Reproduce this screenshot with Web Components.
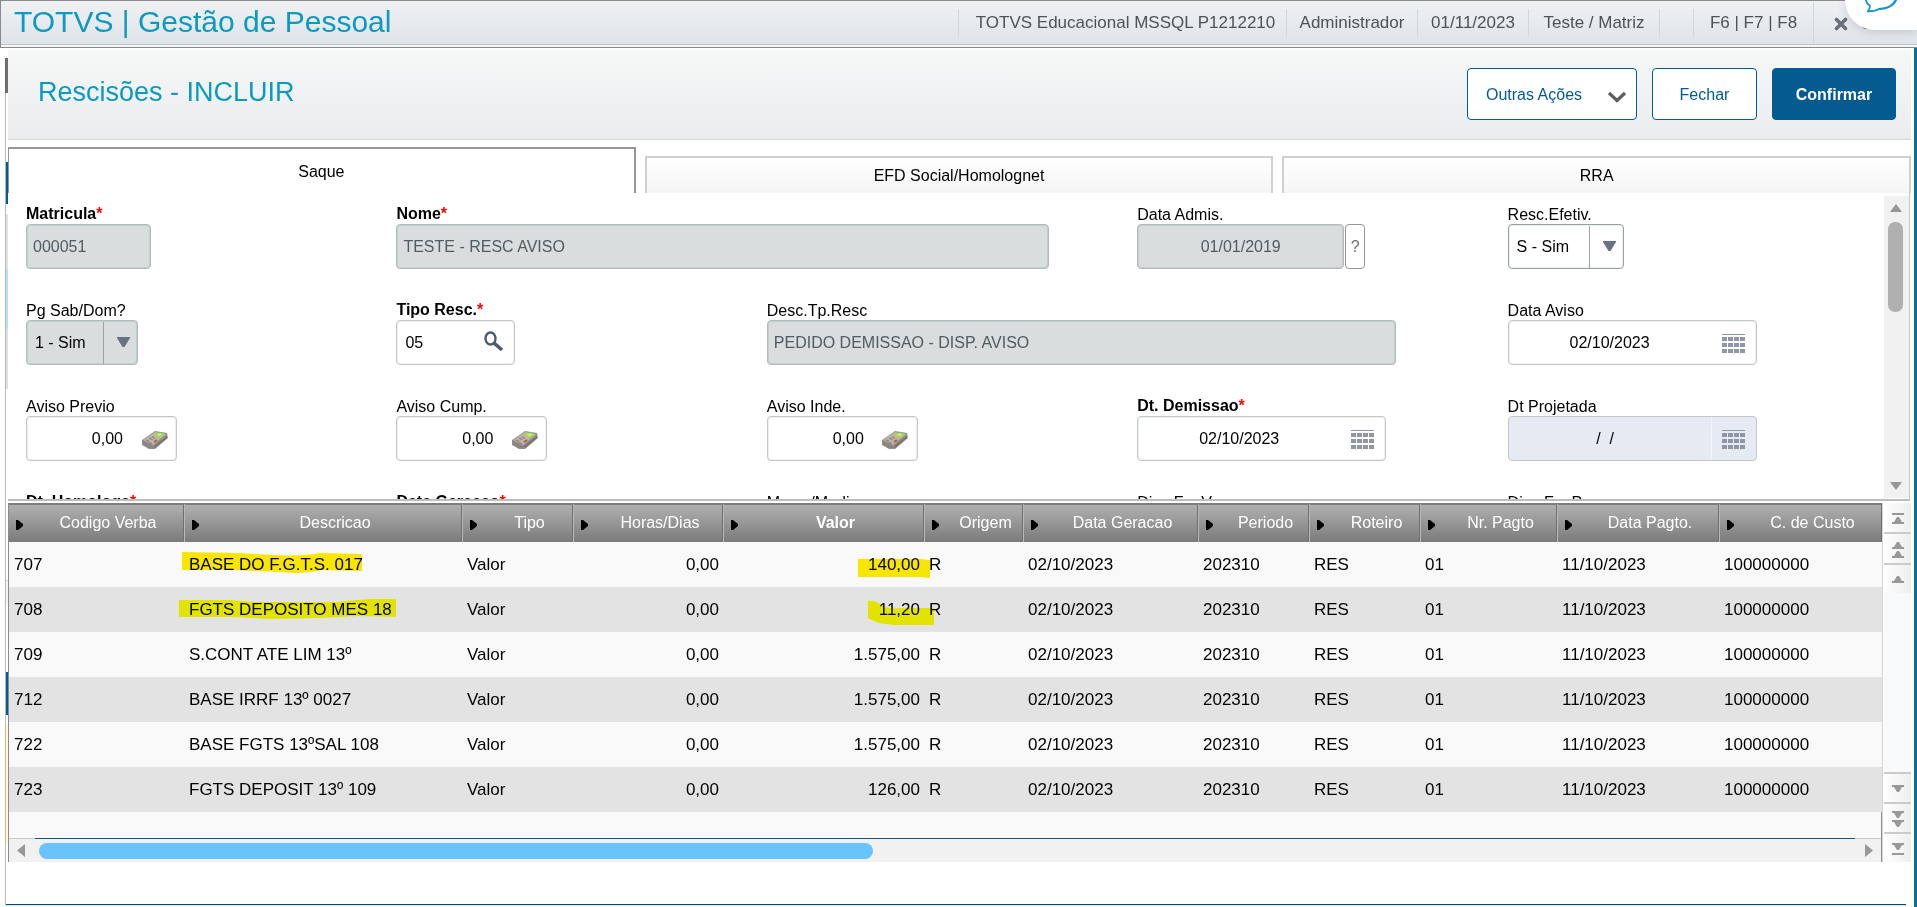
<!DOCTYPE html>
<html lang="pt-BR">
<head>
<meta charset="utf-8">
<title>TOTVS | Gestão de Pessoal</title>
<style>
  html, body { margin: 0; height: 100%; }
  body { background: #fff; font: 16px/20px "Liberation Sans", Arial, sans-serif; color: #000; overflow: hidden; }
</style>
</head>
<body>
<app-shell>
  <top-bar slot="top"></top-bar>
  <page-head heading="Rescisões - INCLUIR"></page-head>
  <tab-strip></tab-strip>
  <form-panel>
    <form-field label="Matricula" required kind="text" value="000051" width="125" locked></form-field>
    <form-field label="Nome" required kind="text" value="TESTE - RESC AVISO" width="653" span="2" locked></form-field>
    <form-field label="Data Admis." kind="text" value="01/01/2019" width="207" centered help locked></form-field>
    <form-field label="Resc.Efetiv." kind="select" value="S - Sim" width="116"></form-field>

    <form-field label="Pg Sab/Dom?" kind="select" value="1 - Sim" width="112" locked></form-field>
    <form-field label="Tipo Resc." required kind="lookup" value="05" width="119"></form-field>
    <form-field label="Desc.Tp.Resc" kind="text" value="PEDIDO DEMISSAO - DISP. AVISO" width="629" span="2" locked></form-field>
    <form-field label="Data Aviso" kind="date" value="02/10/2023" width="249"></form-field>

    <form-field label="Aviso Previo" kind="number" value="0,00" width="151"></form-field>
    <form-field label="Aviso Cump." kind="number" value="0,00" width="151"></form-field>
    <form-field label="Aviso Inde." kind="number" value="0,00" width="151"></form-field>
    <form-field label="Dt. Demissao" required kind="date" value="02/10/2023" width="249"></form-field>
    <form-field label="Dt Projetada" kind="date" value="/  /  " width="249" focused></form-field>

    <form-field label="Dt. Homologa" required kind="date" value="" width="249"></form-field>
    <form-field label="Data Geracao" required kind="date" value="" width="249"></form-field>
    <form-field label="Mes p/Media" kind="number" value="" width="151"></form-field>
    <form-field label="Dias Fer.Venc" kind="number" value="" width="151"></form-field>
    <form-field label="Dias Fer.Prop" kind="number" value="" width="151"></form-field>
  </form-panel>
  <data-grid></data-grid>
</app-shell>

<script>
const define = (name, build) => customElements.define(name, class extends HTMLElement {
  connectedCallback() {
    if (this.shadowRoot) return;
    this.attachShadow({ mode: 'open' }).innerHTML = build(this);
  }
});

define('app-shell', () => `
  <style>
    :host { display: flex; flex-direction: column; height: 100vh; position: relative; }
    .body { flex: 1; min-height: 0; display: flex; padding-left: 5px; }
    .line { width: 1px; margin-bottom: 2px; background: linear-gradient(#fff 10px, #666 10px 45px, #b8b8b8 45px); }
    .edge { width: 2px; background: linear-gradient(#fff 10px, #707070 10px 45px, #fff 45px 114px,
      #005c93 114px 156px, #fff 156px 166px, #e2e2e2 166px 221px, #b5e0fb 221px 281px, #dfdfdf 281px 341px,
      #fff 341px 532px, #d5d5d5 532px 533px, #f4f4f4 533px 556px, #fff 556px 624px, #005c93 624px 667px,
      #fff 667px 676px, #fff8d6 676px 796px, #fff 796px); }
    .main { flex: 1; min-width: 0; display: flex; flex-direction: column; margin-top: 2px; }
    .foot { margin: auto 5px 1px -2px; height: 2px; background: linear-gradient(#00477a 1px, #dde6ee 1px); }
    .gap { width: 3px; }
    .desk { width: 3px; background: #08718b; }
  </style>
  <slot name="top"></slot>
  <div class="body">
    <div class="line"></div><div class="edge"></div>
    <div class="main"><slot></slot><div class="foot"></div></div>
    <div class="gap"></div><div class="desk"></div>
  </div>`);

define('top-bar', () => `
  <style>
    :host { display: flex; box-sizing: border-box; height: 48px; border: 1px solid #8a8a8a; border-right: 0; font-size: 17px;
      background: linear-gradient(#eff1f4, #dfe4e9 43px, #bcc6cc 43px 44px, #f4f6f8 44px); color: #505356; position: relative; }
    h1 { margin: 0 auto 0 13px; font-size: 30px; line-height: 42px; font-weight: 400; color: #0c9abe; white-space: nowrap; }
    .item { box-sizing: border-box; height: 28px; margin-top: 8px; border-left: 1px solid #d2d7da;
      line-height: 28px; text-align: center; white-space: nowrap; }
    .env { width: 328px; padding-left: 6px; }
    .user, .unit { width: 131px; }
    .date { width: 111px; }
    .blank { width: 34px; }
    .keys { width: 120px; }
    .exit { width: 104px; height: 42px; margin: 1px 0 0; padding: 1px 0 0 20px; display: flex; align-items: center; gap: 13px; border: 0;
      border-left: 1px solid #d2d7da; background: none; font: inherit; color: inherit; }
    .chat { position: absolute; top: -1px; right: 0; width: 72px; height: 30px; background: #fff; border-radius: 0 0 0 30px;
      box-shadow: 0 2px 10px rgba(60, 70, 80, .2); border: 0; padding: 0; }
    svg { display: block; }
  </style>
  <h1>TOTVS | Gestão de Pessoal</h1>
  <div class="item env">TOTVS Educacional MSSQL P1212210</div>
  <div class="item user">Administrador</div>
  <div class="item date">01/11/2023</div>
  <div class="item unit">Teste / Matriz</div>
  <div class="item blank"></div>
  <div class="item keys">F6 | F7 | F8</div>
  <button class="exit"><svg width="14" height="14" viewBox="0 0 14 14"><path d="M2.500 2.500L11.500 11.500M11.500 2.500L2.500 11.500" stroke="#69707c" stroke-width="3.600" stroke-linecap="round"/></svg><span>Sair</span></button>
  <button class="chat" aria-label="Chat"><svg width="72" height="30" viewBox="0 0 72 30" fill="none" stroke="#1590d0" stroke-linecap="round" stroke-linejoin="round">
    <path d="M20.500 -1C21 1.500 22.500 4 25 6C24.800 8.400 24 10 22.800 11.300C27.500 11.500 31.500 10.600 34.200 9C42 9.300 49.500 5.500 51.500 -1" stroke-width="1.800"/>
    <path d="M23.500 11.300C29 11.200 32 9.900 34.500 8.400C42.500 8.300 48.500 4.500 50 -1" stroke-width="1"/></svg></button>`);

define('page-head', el => `
  <style>
    :host { display: flex; align-items: flex-start; gap: 15px; box-sizing: border-box; height: 90px; padding: 18px 15px 0 30px;
      border-bottom: 1px solid #d3d6d7; background: linear-gradient(#f6f7f7, #ebecee); }
    h2 { margin: 0 auto 0 0; padding-top: 9px; font-size: 27px; line-height: 31px; font-weight: 400; color: #0c9abe; }
    button { height: 52px; box-sizing: border-box; border: 1px solid #005c93; border-radius: 4px; background: #fff;
      font: inherit; color: #005c93; padding: 2px 0 0; }
    .menu { width: 170px; display: flex; align-items: center; justify-content: space-between; padding: 2px 9px 0 18px; }
    .menu svg { margin-top: 4px; }
    .close { width: 105px; }
    .ok { width: 124px; background: #045b90; color: #fff; font-weight: 700; }
  </style>
  <h2>${el.getAttribute('heading')}</h2>
  <button class="menu">Outras Ações<svg width="20" height="12" viewBox="0 0 20 12"><path d="M2 2L10 9.500L18 2" fill="none" stroke="#5f5f5f" stroke-width="3.200"/></svg></button>
  <button class="close">Fechar</button>
  <button class="ok">Confirmar</button>`);

define('tab-strip', () => `
  <style>
    :host { display: flex; align-items: flex-end; gap: 9px; height: 46px; margin-top: 7px; }
    button { flex: 1; height: 37px; box-sizing: border-box; border: 2px solid #d0d0d0; border-bottom: 0; padding: 0;
      background: linear-gradient(#fff, #f5f5f5); font: inherit; color: #000; }
    .on { height: 46px; border: 1px solid #969696; border-width: 2px 2px 0 1px; padding-top: 1px; background: #fff; }
  </style>
  <button class="on" role="tab" aria-selected="true">Saque</button>
  <button role="tab">EFD Social/Homolognet</button>
  <button role="tab">RRA</button>`);

define('form-panel', () => `
  <style>
    :host { display: flex; box-sizing: border-box; height: 308px; margin-right: 1px; padding-top: 3px; border-right: 1px solid #c6c6c6; border-bottom: 2px solid #bdbdbd; }
    .grid { flex: 1; min-width: 0; overflow: hidden; display: grid; grid-template-columns: repeat(5, 1fr);
      grid-auto-rows: 96px; padding: 8px 6px 0 18px; }
    .bar { width: 25px; box-sizing: border-box; background: #f1f1f1; display: flex; flex-direction: column; align-items: center; padding: 8px 2px 8px 0; margin-bottom: 1px; }
    .thumb { width: 15px; height: 90px; margin: 10px 0 auto; border-radius: 7px; background: #b0b0b0; }
  </style>
  <div class="grid"><slot></slot></div>
  <div class="bar">
    <svg width="12" height="8"><path d="M0 8L6 0L12 8Z" fill="#979797"/></svg>
    <div class="thumb"></div>
    <svg width="12" height="8"><path d="M0 0H12L6 8Z" fill="#979797"/></svg>
  </div>`);

const icons = {
  lookup: `<svg width="20" height="21" viewBox="0 0 20 21" fill="none" stroke="#4d5a6c"><ellipse cx="6.500" cy="7.500" rx="5" ry="6" stroke-width="2.400"/><path d="M10 12L18 19" stroke-width="3.600"/></svg>`,
  number: `<svg width="28" height="20" viewBox="0 0 28 20">
    <path d="M1 10L14 1L26 3L27 8L14 19L8 19L1 15Z" fill="#96908a"/>
    <path d="M2 10L14 2L25 4L12 15Z" fill="#bdb4ad"/>
    <path d="M2 11L12 16L13 18L8 18L1.500 14Z" fill="#8b857f"/>
    <path d="M13 16L26 6L26 8L14 18Z" fill="#77726d"/>
    <path d="M14 3.500L20 2.500L24 5L19 8L13 6Z" fill="#a9d65a"/>
    <path d="M16 4L20 3.500L21 5L18 6Z" fill="#c9ee8c"/>
    <path d="M5 10L8 11.500M8 8L11.500 9.500M8 12.500L11 14M11 6.500L14 8.500" stroke="#94887f" stroke-width="1.400"/>
    <path d="M13 12L16 10" stroke="#c4583f" stroke-width="2"/></svg>`,
  date: `<svg width="23" height="20" viewBox="0 0 23 20" fill="#8f97a6"><path d="M0 0H23V1H0Z"/>${
    [3, 9, 15].map(y => [0, 6, 12, 18].map(x => `<path d="M${x} ${y}h5v4h-5z"/>`).join('')).join('')}</svg>`
};

define('form-field', el => {
  const at = n => el.getAttribute(n), has = n => el.hasAttribute(n);
  const kind = at('kind'), value = at('value');
  const lock = has('locked') ? 'disabled' : '';
  const control = kind === 'select'
    ? `<select id="f" ${lock}><option>${value}</option></select><span class="drop"><svg width="13" height="10"><path d="M0 0H13V1L7.500 10H5.500L0 1Z" fill="#6a7282"/></svg></span>`
    : `<input id="f" type="text" value="${value}" ${lock}>${icons[kind] ? `<button class="ico" aria-label="${kind}">${icons[kind]}</button>` : ''}`;
  return `
  <style>
    :host { display: block; min-width: 0; grid-column: span ${at('span') || 1}; }
    label { display: block; height: 20px; line-height: 22px; white-space: nowrap; }
    label.req { font-weight: 700; line-height: 20px; }
    i { font: inherit; color: #f00; }
    .row { display: flex; gap: 1px; }
    .box { display: flex; box-sizing: border-box; width: ${at('width')}px; height: 45px; border: 1px solid #c3c8c8;
      box-shadow: inset 0 0 0 1px #eef0f0; border-radius: 4px; background: #fff; }
    .box.locked { background: #d9dddd; border-color: #b3bcbc; box-shadow: inset 0 0 0 1px #c6cdcd; }
    .box.select:not(.locked) { border-color: #98a2a4; }
    .box.focused { background: #e6eaf3; box-shadow: none; }
    input, select { flex: 1; min-width: 0; width: 0; margin: 0; padding: 0 6px; border: 0; outline: 0; background: none; appearance: none;
      font: inherit; color: #000; opacity: 1; white-space: pre; }
    .centered input { text-align: center; }
    input:disabled { color: #505c62; -webkit-text-fill-color: #505c62; }
    select { padding: 0 0 0 8px; }
    .lookup input { padding: 0 8px; }
    .date input { text-align: center; padding: 0; }
    .number input { text-align: right; padding: 0; }
    .ico { border: 0; padding: 0; background: none; display: flex; align-items: center; justify-content: center; }
    .date .ico { width: 45px; padding: 2px 0 0; }
    .focused .ico { border-left: 1px solid #f4f6fa; }
    .number .ico { width: 53px; padding: 2px 0 0 10px; }
    .lookup .ico { width: 42px; padding: 0 0 2px 2px; }
    .drop { width: 34px; margin-top: 1px; border-left: 1px solid #9aa3a6; display: flex; align-items: center; justify-content: center; padding: 0 0 2px 6px; box-sizing: border-box; pointer-events: none; }
    .help { width: 20px; height: 45px; border: 1px solid #969696; border-radius: 4px; background: #fff; padding: 0; font: inherit; color: #6f6f6f; }
  </style>
  <label for="f" class="${has('required') ? 'req' : ''}">${at('label')}${has('required') ? '<i>*</i>' : ''}</label>
  <div class="row"><div class="box ${kind} ${has('locked') ? 'locked' : ''} ${has('focused') ? 'focused' : ''} ${has('centered') ? 'centered' : ''}">${control}</div>${has('help') ? '<button class="help">?</button>' : ''}</div>`;
});

const columns = [['Codigo Verba', 175], ['Descricao', 278], ['Tipo', 111], ['Horas/Dias', 150], ['Valor', 201], ['Origem', 99],
  ['Data Geracao', 175], ['Periodo', 111], ['Roteiro', 111], ['Nr. Pagto', 137], ['Data Pagto.', 162], ['C. de Custo', 163]];
const rows = [['707', 'BASE DO F.G.T.S. 017', '140,00'], ['708', 'FGTS DEPOSITO MES 18', '11,20'], ['709', 'S.CONT ATE LIM 13º', '1.575,00'],
  ['712', 'BASE IRRF 13º 0027', '1.575,00'], ['722', 'BASE FGTS 13ºSAL 108', '1.575,00'], ['723', 'FGTS DEPOSIT 13º 109', '126,00']];
const marks = {
  '0-1': ['left:-2px;top:10px', 180, 22, 'M0 0L52 1L92 3C112 4 128 3 138 1L180 2V19L140 18C128 21 112 22 100 20L50 18L0 18Z'],
  '1-1': ['left:-5px;top:12px', 217, 21, 'M0 1H50L76 3L160 3C176 1 186 0 196 0H217V18L180 17L140 19L90 20L56 18L0 18Z'],
  '0-4': ['right:-6px;top:17px', 72, 19, 'M0 0H62L72 1V19L62 18H0Z'],
  '1-4': ['right:-10px;top:14px', 66, 25, 'M0 0C6 -1 9 1 13 4C18 7 24 8 34 7H66V24H32C18 24 8 22 0 17Z']
};
const mark = (r, c) => {
  const m = marks[r + '-' + c];
  return m ? `<svg class="mark" style="${m[0]}" width="${m[1]}" height="${m[2]}"><path d="${m[3]}" fill="${r ? '#ffff00' : '#ffec00'}"/></svg>` : '';
};
const cells = r => [r[0], r[1], 'Valor', '0,00', r[2], 'R', '02/10/2023', '202310', 'RES', '01', '11/10/2023', '100000000'];
const up = y => `<path d="M2 ${y + 7}H14V${y + 5}H12L9 ${y}H7L4 ${y + 5}H2Z" fill="#989898"/>`;
const down = y => `<path d="M2 ${y}H14V${y + 2}H12L9 ${y + 7}H7L4 ${y + 2}H2Z" fill="#989898"/>`;
const nav = (name, art) => `<button aria-label="${name}"><svg width="16" height="22">${art}</svg></button>`;

define('data-grid', () => `
  <style>
    :host { display: flex; height: 359px; margin-top: 2px; }
    .left { flex: 1; min-width: 0; display: flex; flex-direction: column; border-left: 1px solid #8c8c8c; border-right: 1px solid #8f8f8f; box-shadow: 1px 0 #d4d4d4; margin-right: 2px; }
    .view { flex: 1; min-height: 0; background: #f9f9f9; }
    table { width: 100%; table-layout: fixed; border-collapse: separate; border-spacing: 0; }
    th { box-sizing: border-box; height: 39px; padding: 0 0 2px 24px; border-top: 2px solid #7e7e7e; border-left: 1px solid #b9b9b9; border-right: 1px solid #707070;
      background: linear-gradient(#b0b0b0, #7b7b7b); color: #fff; font-weight: 400; position: relative; white-space: nowrap; }
    th:first-child { border-left: 0; }
    th svg { position: absolute; left: 7px; top: 15px; }
    .sorted { font-weight: 700; }
    td { height: 45px; padding: 0 4px 0 5px; position: relative; white-space: nowrap; font-size: 17px; }
    tr:nth-child(even) td { background: #e3e3e3; }
    tr:nth-child(odd) td { background: #f9f9f9; }
    .r { text-align: right; }
    .t { font-size: 16px; }
    .mark { position: absolute; mix-blend-mode: multiply; z-index: 1; overflow: visible; }
    .rule { height: 1px; background: #c9c9c9; padding: 0 26px; }
    .rule div { height: 1px; background: #005c93; }
    .hbar { height: 23px; background: #f1f1f1; display: flex; align-items: center; padding: 0 8px; }
    .track { flex: 1; margin: 0 14px; }
    .thumb { width: 46%; height: 16px; border-radius: 8px; background: #69c3fd; }
    .side { width: 27px; background: #f8f9fb; display: flex; flex-direction: column; }
    .side button { height: 31px; box-sizing: border-box; border: 0; border-bottom: 2px solid #cbcbcb; padding: 2px 0 0; background: linear-gradient(90deg, #fff, #eee);
      display: flex; align-items: center; justify-content: center; }
    .side button:nth-child(3) { height: 28px; border: 0; margin-bottom: auto; }
    .side button:nth-child(n+4) { height: 30px; border-bottom: 0; border-top: 2px solid #cbcbcb; }
  </style>
  <div class="left">
    <div class="view"><table>
      <colgroup>${columns.map(c => `<col style="width:${c[1]}px">`).join('')}</colgroup>
      <thead><tr>${columns.map(c => `<th class="${c[0] === 'Valor' ? 'sorted' : ''}"><svg width="7" height="10"><path d="M0 0H2L7 4V6L2 10H0Z"/></svg>${c[0]}</th>`).join('')}</tr></thead>
      <tbody>${rows.map((r, i) => `<tr>${cells(r).map((t, c) => `<td class="${c === 3 || c === 4 ? 'r' : ''}">${t}${mark(i, c)}</td>`).join('')}</tr>`).join('')}</tbody>
    </table></div>
    <div class="rule"><div></div></div>
    <div class="hbar">
      <svg width="8" height="13"><path d="M8 0V13L0 6.500Z" fill="#979797"/></svg>
      <div class="track"><div class="thumb"></div></div>
      <svg width="8" height="13"><path d="M0 0V13L8 6.500Z" fill="#979797"/></svg>
    </div>
  </div>
  <div class="side">
    ${nav('Primeiro', '<path d="M2 5H14V7H2Z" fill="#989898"/>' + up(9))}
    ${nav('Página anterior', up(3) + up(12))}
    ${nav('Anterior', up(7))}
    ${nav('Próximo', down(7))}
    ${nav('Próxima página', down(3) + down(12))}
    ${nav('Último', down(5) + '<path d="M2 15H14V17H2Z" fill="#989898"/>')}
  </div>`);
</script>
</body>
</html>
